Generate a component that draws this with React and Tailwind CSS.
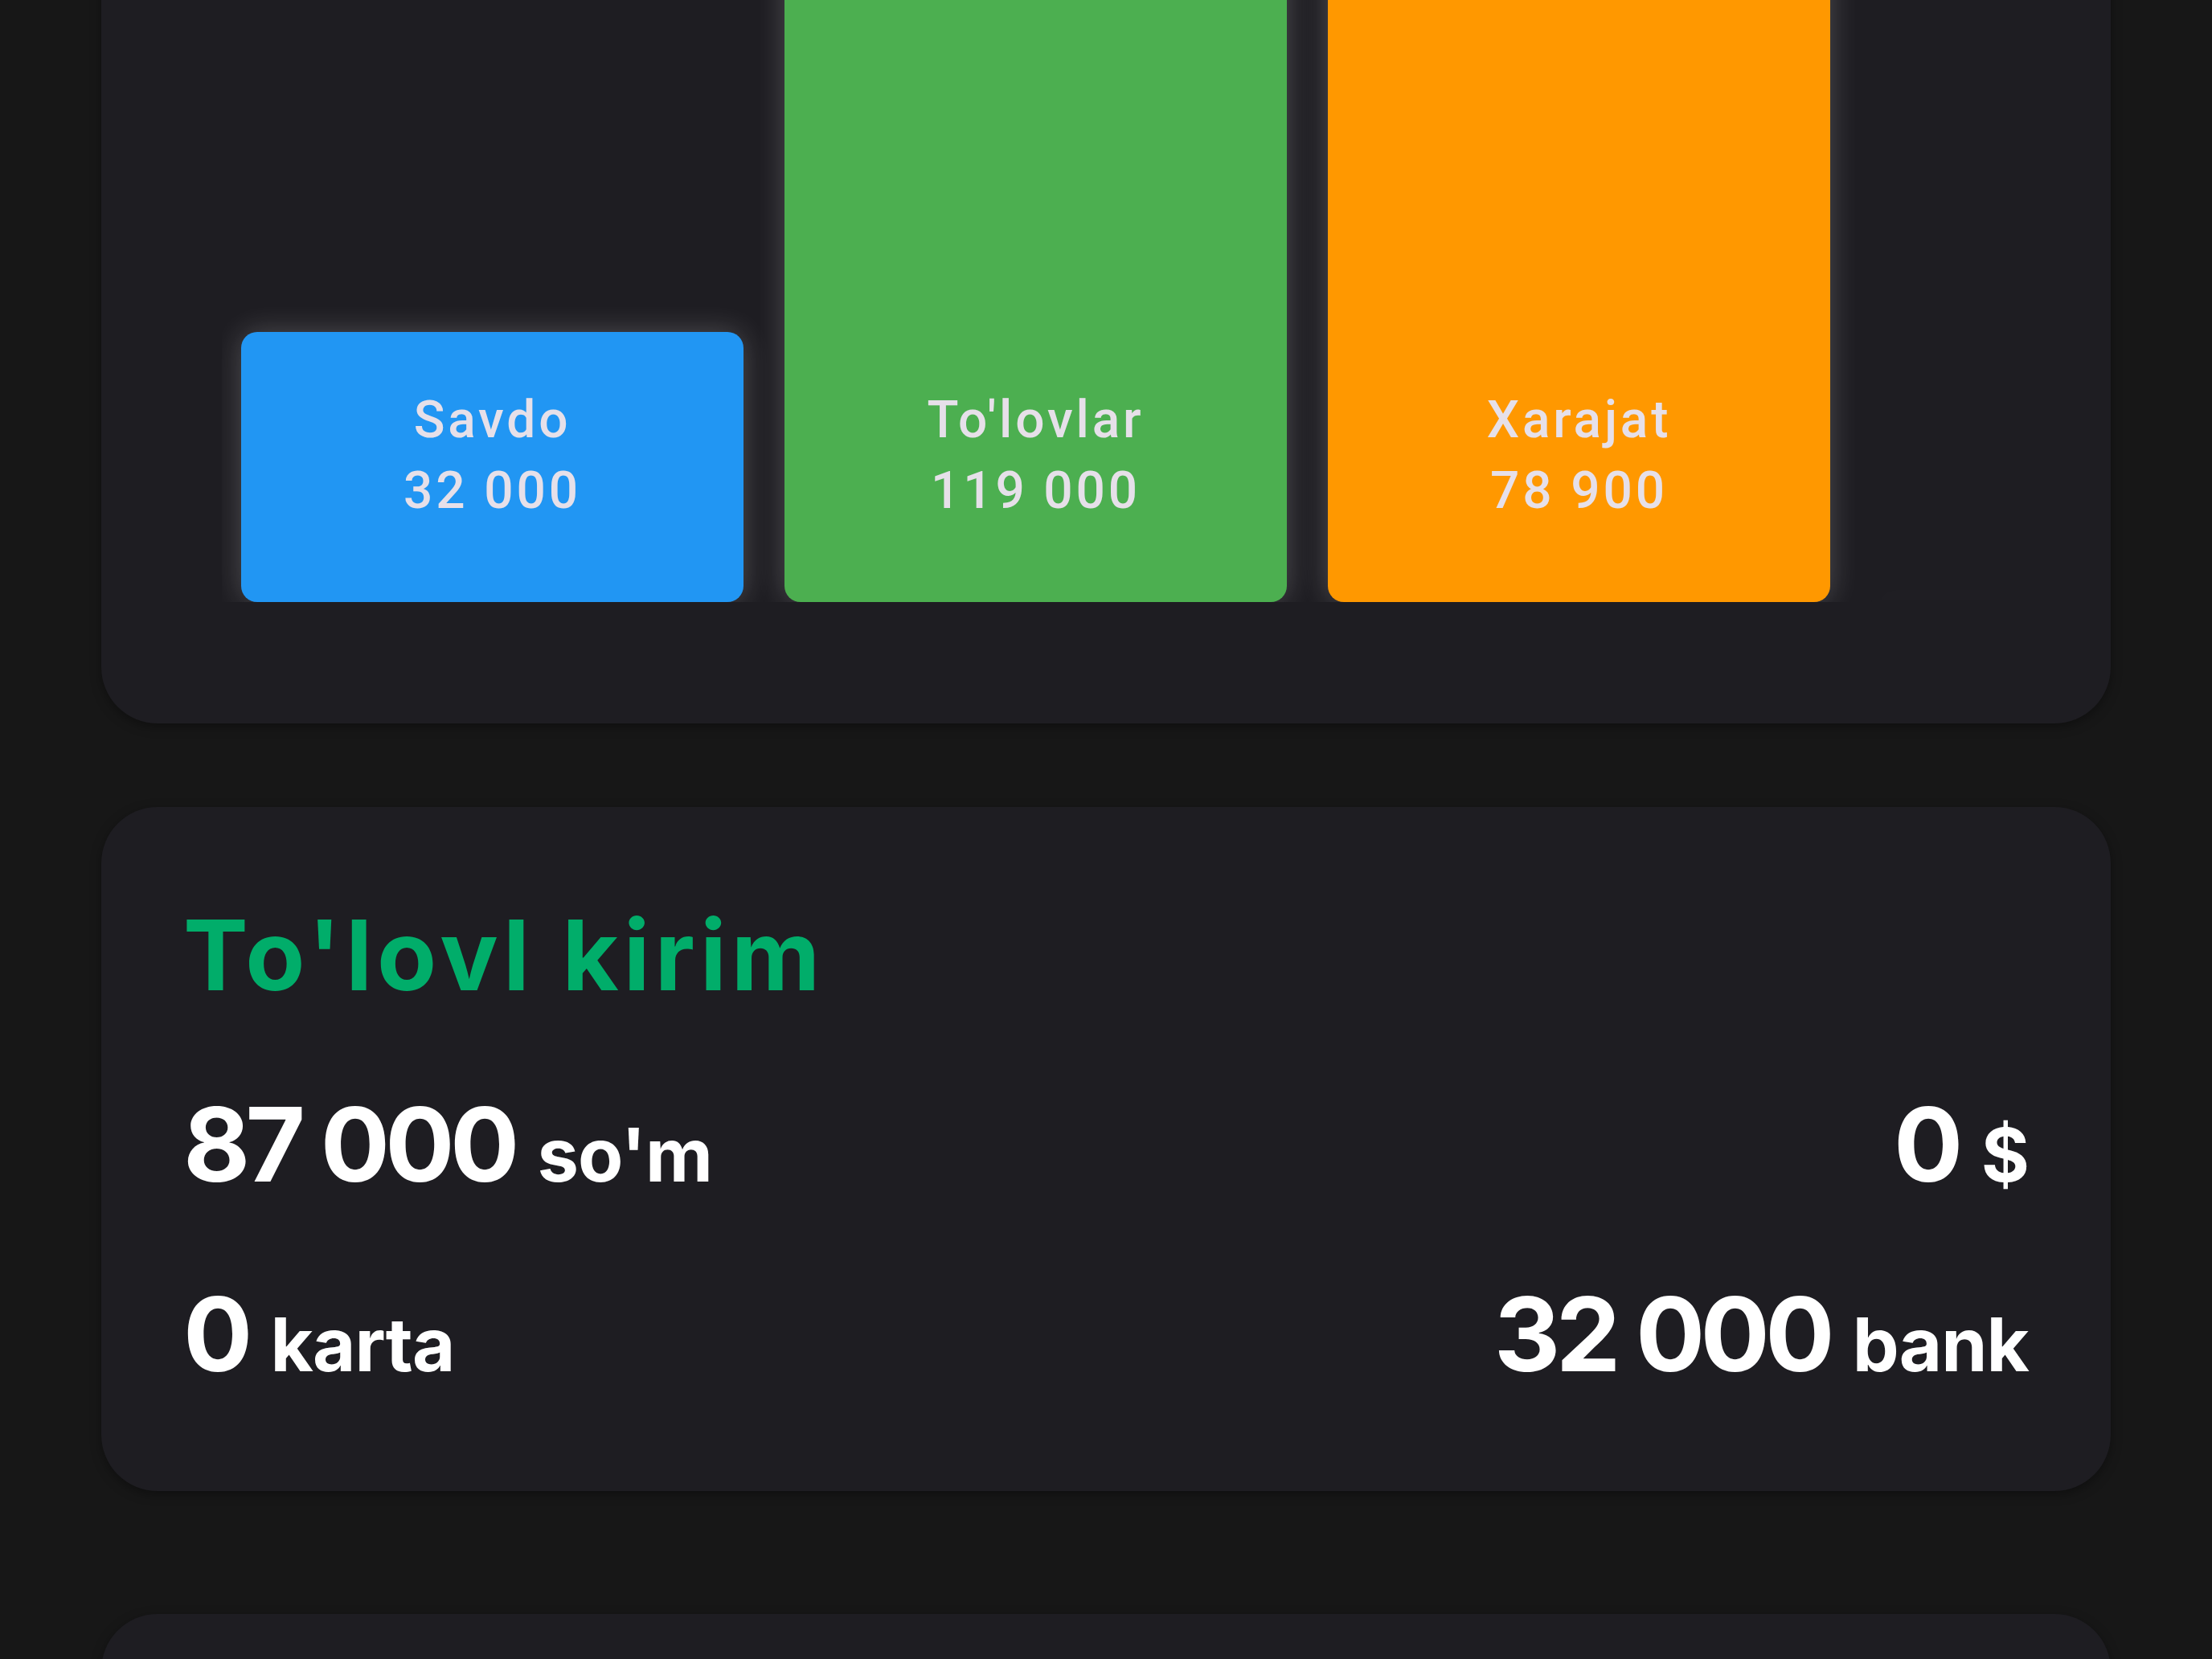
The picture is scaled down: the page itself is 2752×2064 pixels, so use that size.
const bars = [
  { label: 'Savdo',     value: 32000,  color: 'bg-[#2196f3]' },
  { label: "To'lovlar", value: 119000, color: 'bg-[#4caf50]' },
  { label: 'Xarajat',   value: 78900,  color: 'bg-[#ff9800]' },
  { label: '',          value: 0,      color: 'bg-[#1e1d22]' },
]

const fmt = (n) => n.toLocaleString('en-US').replace(/,/g, ' ')

function Bar({ label, value, color }) {
  // 32 000 -> 336px tall, the rest in proportion
  const h = Math.max(2, Math.round((value / 32000) * 336))
  return (
    <div
      className={`w-[625px] shrink-0 rounded-[20px] flex flex-col items-center justify-end shadow-[0_0_36px_rgba(255,255,255,0.22)] ${color}`}
      style={{ height: h }}
    >
      {label && (
        <div className="pb-[94px] text-center text-[64px] leading-[88px] font-medium tracking-[0.06em] text-[#e6e0e9] font-['Roboto',sans-serif]">
          <div>{label}</div>
          <div>{fmt(value)}</div>
        </div>
      )}
    </div>
  )
}

function Amount({ value, unit }) {
  return (
    <div className="flex items-baseline">
      <span className="text-[128px] leading-none font-bold text-white tracking-[-0.045em]">{value}</span>
      <span className="ml-[28px] text-[92px] leading-none font-bold text-white tracking-[-0.01em]">{unit}</span>
    </div>
  )
}

export default function App() {
  return (
    <div className="h-[2064px] overflow-hidden bg-[#171717] flex flex-col px-[126px] font-['Inter',sans-serif]">

      {/* chart card */}
      <div className="mt-[-651px] rounded-[70px] bg-[#1e1d22] pt-[100px] pb-[151px] px-[150px] shadow-[0_4px_14px_rgba(0,0,0,0.35)]">
        <div className="h-[1300px] overflow-hidden flex items-end gap-[51px] pl-[24px]">
          {bars.map((b, i) => <Bar key={i} {...b} />)}
        </div>
      </div>

      {/* payments card */}
      <div className="mt-[104px] rounded-[70px] bg-[#1e1d22] pt-[124px] pb-[131px] px-[102px] shadow-[0_4px_14px_rgba(0,0,0,0.35)]">
        <h2 className="text-[121px] leading-none font-bold text-[#01ad6a] tracking-[0.05em]">To'lovl kirim</h2>
        <div className="mt-[111px] flex justify-between items-baseline">
          <Amount value="87 000" unit="so'm" />
          <Amount value="0" unit="$" />
        </div>
        <div className="mt-[108px] flex justify-between items-baseline">
          <Amount value="0" unit="karta" />
          <Amount value="32 000" unit="bank" />
        </div>
      </div>

      {/* next card, cut off by the screen */}
      <div className="mt-[153px] h-[400px] shrink-0 rounded-[70px] bg-[#1e1d22] shadow-[0_4px_14px_rgba(0,0,0,0.35)]" />

    </div>
  )
}
